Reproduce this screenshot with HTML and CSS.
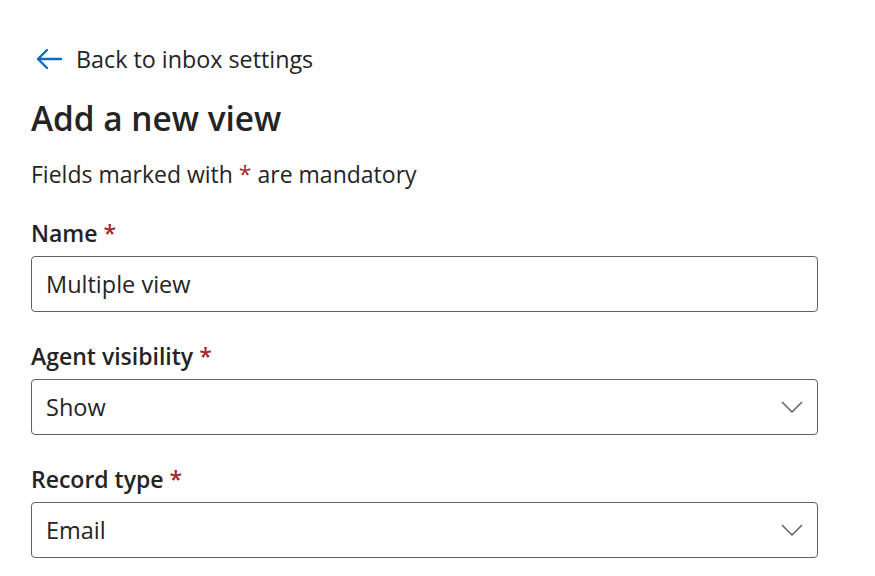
FILE: index.html
```html
<!DOCTYPE html>
<html>
<head>
<meta charset="utf-8">
<link rel="stylesheet" href="styles.css">
</head>
<body>
<main class="page">
  <a class="back" href="#">
    <svg class="back-icon" width="28" height="22" viewBox="0 0 28 22" aria-hidden="true">
      <path d="M26 11H3M12 2L3 11l9 9" fill="none" stroke="#0f6cbd" stroke-width="2.4" stroke-linecap="round" stroke-linejoin="round"/>
    </svg>
    <span>Back to inbox settings</span>
  </a>
  <h1 class="title">Add a new view</h1>
  <p class="note">Fields marked with <span class="req">*</span> are mandatory</p>

  <div class="field">
    <label class="label">Name <span class="req">*</span></label>
    <div class="box"><span class="value">Multiple view</span></div>
  </div>

  <div class="field">
    <label class="label">Agent visibility <span class="req">*</span></label>
    <div class="box"><span class="value">Show</span>
      <svg class="chev" width="22" height="12" viewBox="0 0 22 12" aria-hidden="true"><path d="M1 1l10 10L21 1" fill="none" stroke="#616161" stroke-width="1.5"/></svg>
    </div>
  </div>

  <div class="field">
    <label class="label">Record type <span class="req">*</span></label>
    <div class="box"><span class="value">Email</span>
      <svg class="chev" width="22" height="12" viewBox="0 0 22 12" aria-hidden="true"><path d="M1 1l10 10L21 1" fill="none" stroke="#616161" stroke-width="1.5"/></svg>
    </div>
  </div>
</main>
</body>
</html>
```

FILE: styles.css
```css
html, body {
  margin: 0;
  padding: 0;
  background: #ffffff;
}
body {
  font-family: "Open Sans", "Noto Sans", sans-serif;
  color: #242424;
}
.page {
  width: 787px;
  padding: 44px 0 0 31px;
}
.back {
  display: flex;
  align-items: center;
  gap: 13px;
  color: #242424;
  text-decoration: none;
  font-size: 23.3px;
  line-height: 30px;
  padding-left: 4px;
}
.back-icon {
  display: block;
}
.title {
  margin: 24px 0 0;
  font-size: 33.4px;
  line-height: 40px;
  font-weight: 600;
}
.note {
  margin: 21px 0 0;
  font-size: 23px;
  line-height: 30px;
}
.req {
  color: #a4262c;
}
.field {
  margin-top: 29px;
}
.field + .field {
  margin-top: 29px;
}
.label {
  display: block;
  font-size: 23px;
  line-height: 30px;
  font-weight: 600;
  margin-bottom: 8px;
}
.box {
  height: 56px;
  box-sizing: border-box;
  border: 1px solid #616161;
  border-radius: 4px;
  display: flex;
  align-items: center;
  justify-content: space-between;
  padding: 0 14px;
  font-size: 23.5px;
}
.chev {
  display: block;
}
```
